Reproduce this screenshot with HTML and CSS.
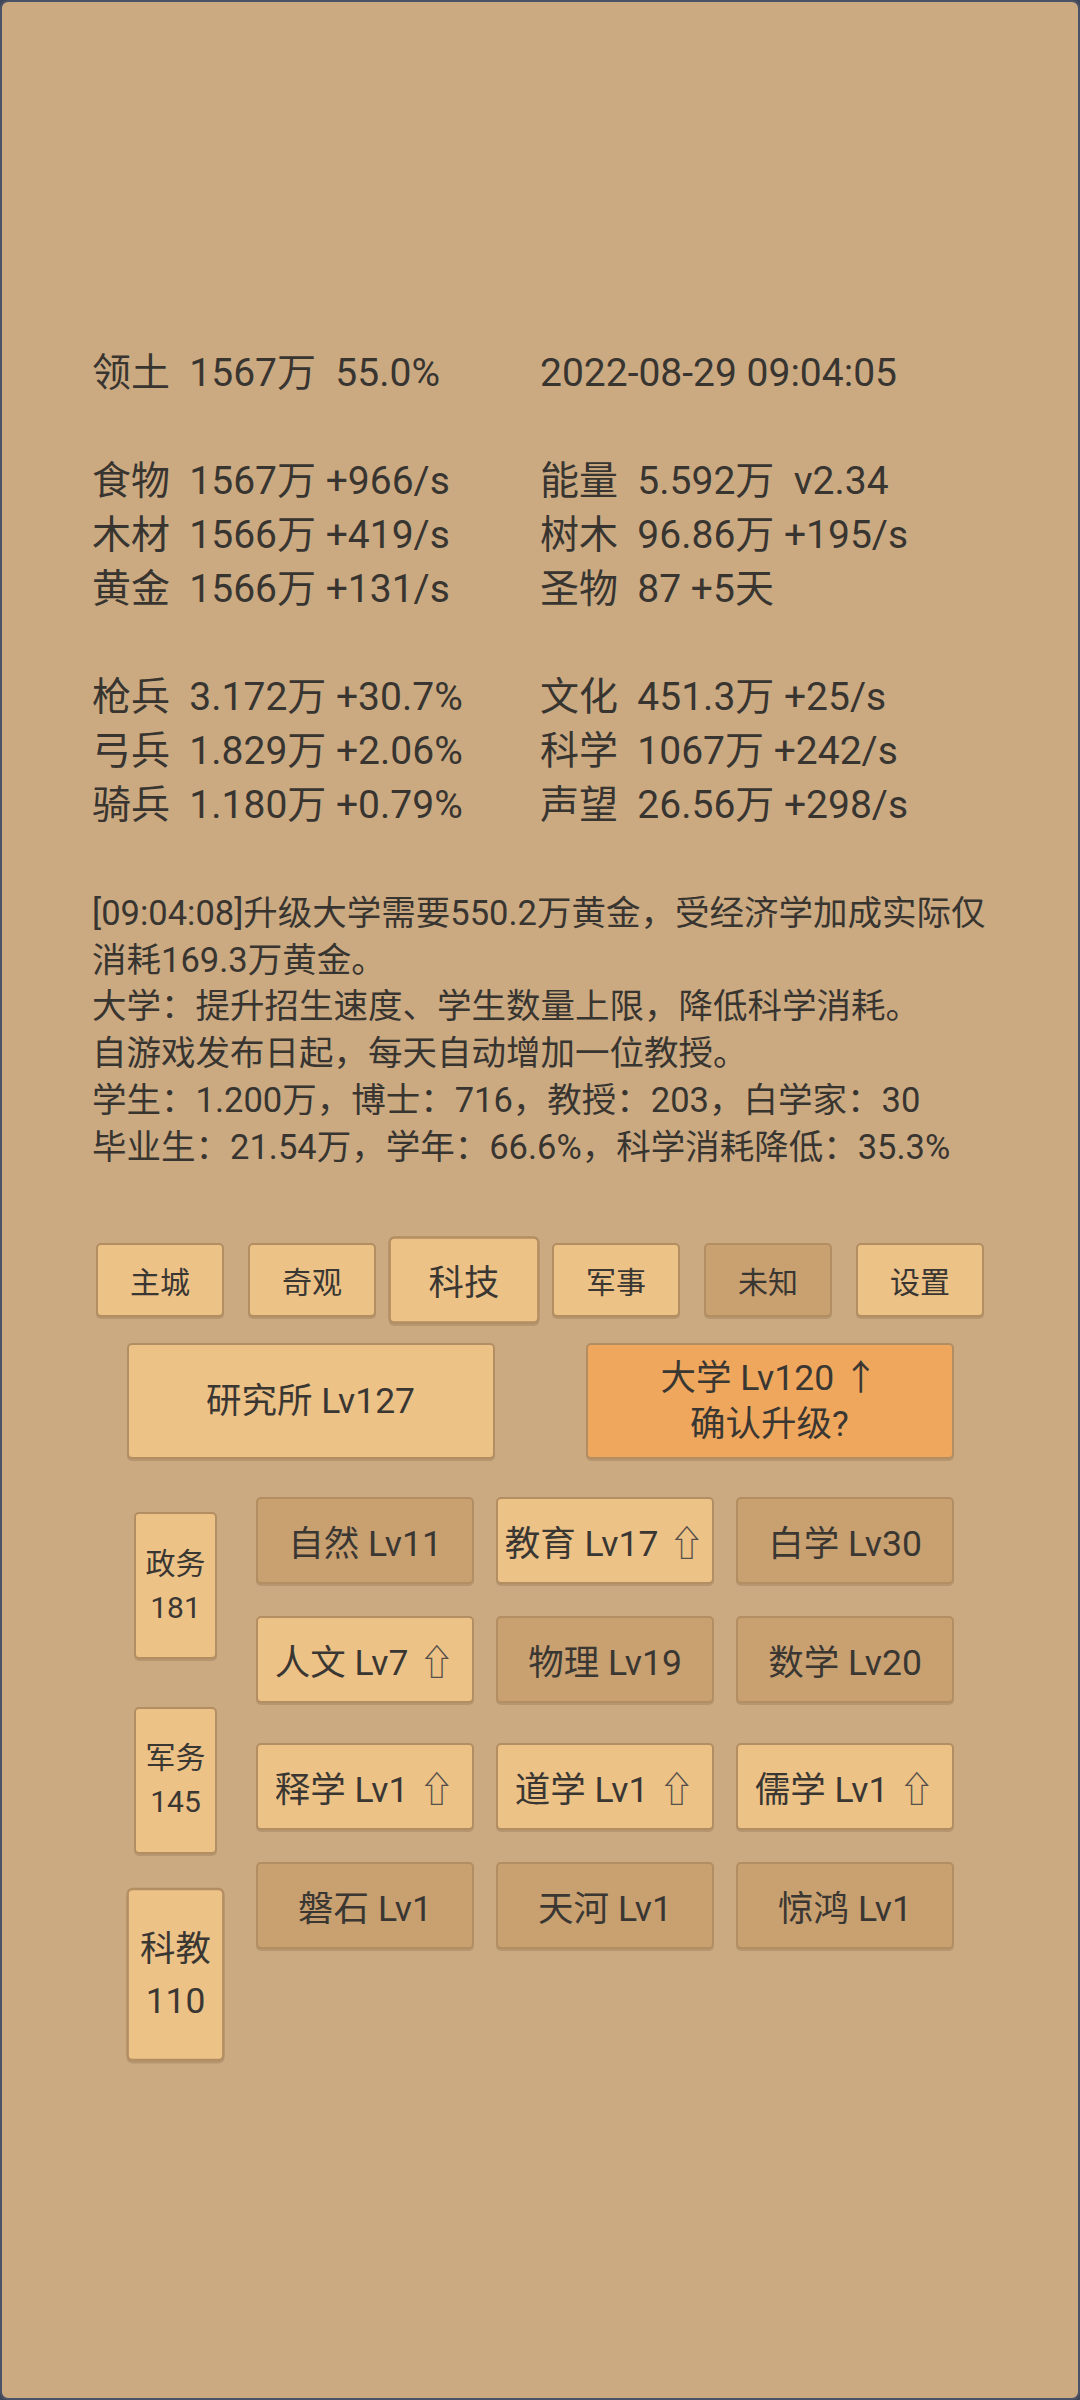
FILE: index.html
```html
<!DOCTYPE html>
<html lang="zh-CN">
<head>
<meta charset="utf-8">
<title>科技</title>
<link rel="stylesheet" href="styles.css">
</head>
<body>
<div class="screen">
  <div class="stats">
    <div class="cell">领土  1567万  55.0%</div><div class="cell">2022-08-29 09:04:05</div>
    <div class="blank"></div>
    <div class="cell">食物  1567万 +966/s</div><div class="cell">能量  5.592万  v2.34</div>
    <div class="cell">木材  1566万 +419/s</div><div class="cell">树木  96.86万 +195/s</div>
    <div class="cell">黄金  1566万 +131/s</div><div class="cell">圣物  87 +5天</div>
    <div class="blank"></div>
    <div class="cell">枪兵  3.172万 +30.7%</div><div class="cell">文化  451.3万 +25/s</div>
    <div class="cell">弓兵  1.829万 +2.06%</div><div class="cell">科学  1067万 +242/s</div>
    <div class="cell">骑兵  1.180万 +0.79%</div><div class="cell">声望  26.56万 +298/s</div>
  </div>

  <div class="log">
    <div>[09:04:08]升级大学需要550.2万黄金，受经济学加成实际仅</div>
    <div>消耗169.3万黄金。</div>
    <div>大学：提升招生速度、学生数量上限，降低科学消耗。</div>
    <div>自游戏发布日起，每天自动增加一位教授。</div>
    <div>学生：1.200万，博士：716，教授：203，白学家：30</div>
    <div>毕业生：21.54万，学年：66.6%，科学消耗降低：35.3%</div>
  </div>

  <div class="tabs">
    <div class="btn tab">主城</div>
    <div class="btn tab">奇观</div>
    <div class="btn tab selected">科技</div>
    <div class="btn tab">军事</div>
    <div class="btn tab dark">未知</div>
    <div class="btn tab">设置</div>
  </div>

  <div class="bigrow">
    <div class="btn big">研究所 Lv127</div>
    <div class="btn big orange"><span>大学 Lv120 ↑</span><span>确认升级?</span></div>
  </div>

  <div class="bottom">
    <div class="side">
      <div class="btn sidebtn"><span>政务</span><span>181</span></div>
      <div class="btn sidebtn"><span>军务</span><span>145</span></div>
      <div class="btn sidebtn selected"><span>科教</span><span>110</span></div>
    </div>
    <div class="groups">
      <div class="grid">
        <div class="btn cellbtn dark">自然 Lv11</div>
        <div class="btn cellbtn">教育 Lv17 <span class="up">⇧</span></div>
        <div class="btn cellbtn dark">白学 Lv30</div>
        <div class="btn cellbtn">人文 Lv7 <span class="up">⇧</span></div>
        <div class="btn cellbtn dark">物理 Lv19</div>
        <div class="btn cellbtn dark">数学 Lv20</div>
      </div>
      <div class="grid">
        <div class="btn cellbtn">释学 Lv1 <span class="up">⇧</span></div>
        <div class="btn cellbtn">道学 Lv1 <span class="up">⇧</span></div>
        <div class="btn cellbtn">儒学 Lv1 <span class="up">⇧</span></div>
        <div class="btn cellbtn dark">磐石 Lv1</div>
        <div class="btn cellbtn dark">天河 Lv1</div>
        <div class="btn cellbtn dark">惊鸿 Lv1</div>
      </div>
    </div>
  </div>
</div>
</body>
</html>
```

FILE: styles.css
```css
html {
  background: #3e4758;
}
body {
  margin: 0;
}
.screen {
  box-sizing: border-box;
  width: 1080px;
  height: 2400px;
  background: #cbaa82;
  border: 2px solid #4a5366;
  border-radius: 8px;
  overflow: hidden;
  font-family: Roboto, "Noto Sans CJK SC", sans-serif;
  color: #383531;
}
.stats {
  display: grid;
  grid-template-columns: 448px 1fr;
  grid-auto-rows: 54px;
  line-height: 54px;
  font-size: 39px;
  padding: 344px 0 0 90px;
  white-space: pre;
}
.blank {
  grid-column: 1 / 3;
}
.log {
  margin-top: 58px;
  padding-left: 90px;
  font-size: 34.5px;
  line-height: 46.7px;
  white-space: nowrap;
}
.btn {
  box-sizing: border-box;
  background: #edc287;
  border: 2px solid #b38e62;
  border-radius: 5px;
  box-shadow: 0 2px 0 rgba(110, 80, 45, 0.22);
  display: flex;
  align-items: center;
  justify-content: center;
  color: #3a3733;
}
.btn.dark {
  background: #c9a070;
}
.btn.orange {
  background: #eea75d;
}
.tabs {
  margin-top: 73px;
  display: flex;
  justify-content: center;
  gap: 24px;
}
.tab {
  width: 128px;
  height: 74px;
  font-size: 30px;
}
.selected {
  transform: scale(1.18);
}
.bigrow {
  margin-top: 26px;
  display: flex;
  justify-content: center;
  gap: 91px;
}
.big {
  width: 368px;
  height: 116px;
  font-size: 35.5px;
  flex-direction: column;
  line-height: 46px;
}
.bottom {
  margin-top: 38px;
  display: flex;
  padding-left: 132px;
  gap: 39px;
}
.side {
  padding-top: 15px;
  display: flex;
  flex-direction: column;
  gap: 47.5px;
}
.sidebtn {
  width: 83px;
  height: 147px;
  flex-direction: column;
  font-size: 30px;
  line-height: 44px;
}
.groups {
  display: flex;
  flex-direction: column;
  gap: 40px;
}
.grid {
  display: grid;
  grid-template-columns: repeat(3, 218px);
  grid-auto-rows: 87px;
  column-gap: 22px;
  row-gap: 32px;
}
.cellbtn {
  font-size: 35.5px;
  white-space: pre;
}
.up {
  font-family: "DejaVu Sans", sans-serif;
  font-weight: 200;
  color: #55504a;
  margin-left: 2px;
}
```
